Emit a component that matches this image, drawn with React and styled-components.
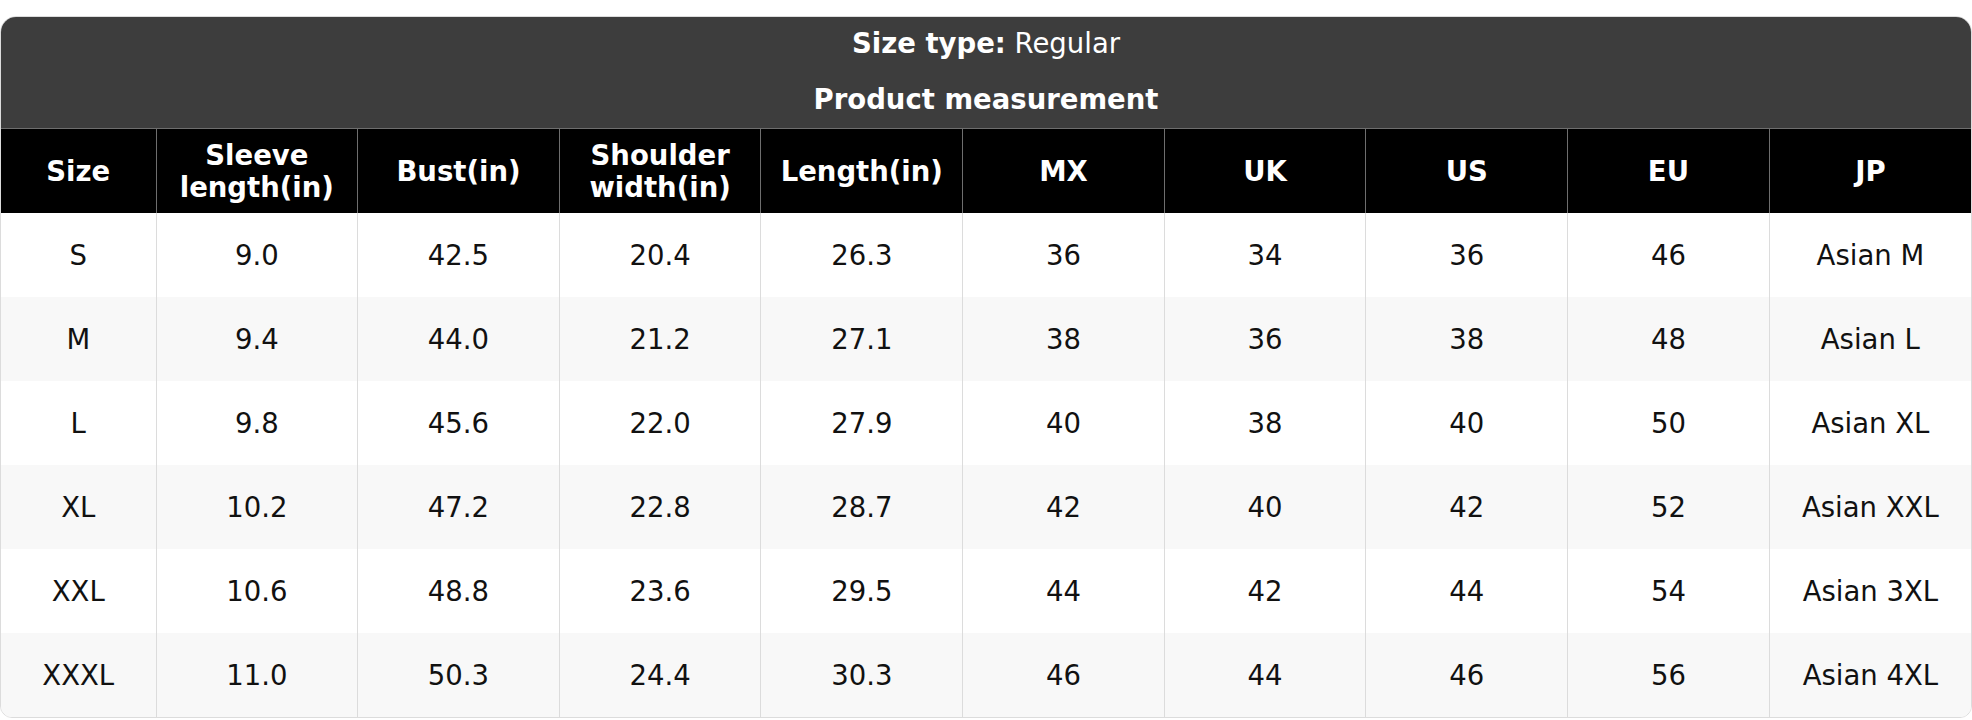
import React from "react";
import styled, { createGlobalStyle } from "styled-components";

const GlobalStyle = createGlobalStyle`
  html, body {
    margin: 0;
    padding: 0;
    background: #ffffff;
    font-family: "DejaVu Sans", "Liberation Sans", sans-serif;
  }
`;

/**
 * Contenedor con esquinas redondeadas
 */
const Card = styled.div`
  margin-top: 16px;
  border: 1px solid #dcdcdc;
  border-radius: 16px 16px 12px 12px;
  overflow: hidden;
  background: #ffffff;
`;

/**
 * Cabecera gris oscura con el tipo de talla
 */
const Banner = styled.div`
  background: #3d3d3d;
  color: #ffffff;
  padding: 10px 0 13px;
  display: flex;
  flex-direction: column;
  align-items: center;
  gap: 24px;
  font-size: 27.5px;
  line-height: 32px;
`;

const BannerLine = styled.div`
  font-weight: ${(p) => (p.$bold ? 700 : 400)};

  strong {
    font-weight: 700;
  }
`;

const Table = styled.table`
  width: 100%;
  border-collapse: collapse;
  table-layout: fixed;
  font-size: 27.5px;
  line-height: 32px;
`;

const HeaderCell = styled.th`
  background: #000000;
  color: #ffffff;
  font-weight: 700;
  height: 84px;
  padding: 10px 8px;
  box-sizing: border-box;
  text-align: center;
  vertical-align: middle;
  border: 1px solid #6e6e6e;
  border-bottom: none;

  &:first-child {
    border-left: none;
  }
  &:last-child {
    border-right: none;
  }
`;

const BodyRow = styled.tr`
  background: ${(p) => (p.$alt ? "#f8f8f8" : "#ffffff")};
`;

const BodyCell = styled.td`
  height: 84px;
  padding: 0 8px;
  box-sizing: border-box;
  text-align: center;
  vertical-align: middle;
  color: #111111;
  border-left: 1px solid #dcdcdc;

  &:first-child {
    border-left: none;
  }
`;

const columns = [
  "Size",
  "Sleeve length(in)",
  "Bust(in)",
  "Shoulder width(in)",
  "Length(in)",
  "MX",
  "UK",
  "US",
  "EU",
  "JP",
];

const rows = [
  ["S", "9.0", "42.5", "20.4", "26.3", "36", "34", "36", "46", "Asian M"],
  ["M", "9.4", "44.0", "21.2", "27.1", "38", "36", "38", "48", "Asian L"],
  ["L", "9.8", "45.6", "22.0", "27.9", "40", "38", "40", "50", "Asian XL"],
  ["XL", "10.2", "47.2", "22.8", "28.7", "42", "40", "42", "52", "Asian XXL"],
  ["XXL", "10.6", "48.8", "23.6", "29.5", "44", "42", "44", "54", "Asian 3XL"],
  ["XXXL", "11.0", "50.3", "24.4", "30.3", "46", "44", "46", "56", "Asian 4XL"],
];

const App = () => (
  <>
    <GlobalStyle />
    <Card>
      <Banner>
        <BannerLine>
          <strong>Size type:</strong> Regular
        </BannerLine>
        <BannerLine $bold>Product measurement</BannerLine>
      </Banner>
      <Table>
        <colgroup>
          <col style={{ width: 155 }} />
          {columns.slice(1).map((c) => (
            <col key={c} />
          ))}
        </colgroup>
        <thead>
          <tr>
            {columns.map((c) => (
              <HeaderCell key={c}>{c}</HeaderCell>
            ))}
          </tr>
        </thead>
        <tbody>
          {rows.map((r, i) => (
            <BodyRow key={r[0]} $alt={i % 2 === 1}>
              {r.map((v, j) => (
                <BodyCell key={j}>{v}</BodyCell>
              ))}
            </BodyRow>
          ))}
        </tbody>
      </Table>
    </Card>
  </>
);

export default App;
